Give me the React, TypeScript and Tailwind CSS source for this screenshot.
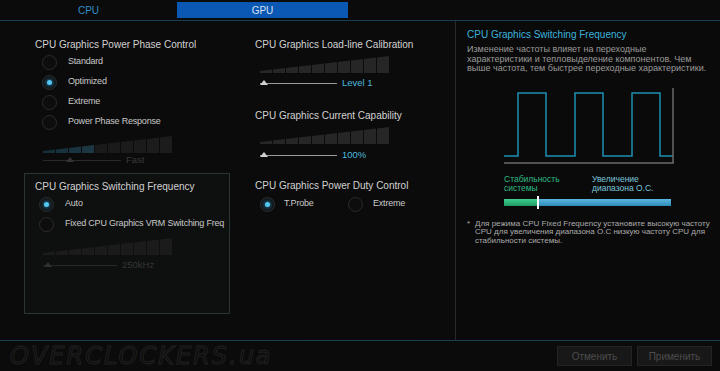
import type { ReactNode } from "react";

const font = { fontFamily: '"Liberation Sans", Arial, sans-serif' };

function Stairs({ colors }: { colors: string[] }) {
  const H = 17;
  const h = (x: number) => 2 + (15 * x) / 129;
  return (
    <svg width="130" height={H} className="block">
      {colors.map((c, i) => {
        const x0 = i * 13;
        const x1 = x0 + 12;
        return (
          <polygon
            key={i}
            points={`${x0},${H} ${x0},${H - h(x0)} ${x1},${H - h(x1)} ${x1},${H}`}
            fill={c}
          />
        );
      })}
    </svg>
  );
}

function Slider({
  knob,
  line,
  label,
  labelClass,
  knobClass,
  lineW,
}: {
  knob: number;
  line: string;
  label: string;
  labelClass: string;
  knobClass: string;
  lineW: number;
}) {
  return (
    <div className="flex h-[12px] items-center">
      <div className="relative h-[12px]" style={{ width: lineW }}>
        <div className={`absolute left-0 right-0 top-[6px] h-px ${line}`} />
        <div
          className={`absolute top-[3px] h-0 w-0 border-x-[4px] border-b-[5px] border-x-transparent ${knobClass}`}
          style={{ left: knob }}
        />
      </div>
      <span className={`ml-[5px] text-[9.5px] leading-none ${labelClass}`}>{label}</span>
    </div>
  );
}

function Radio({ on }: { on?: boolean }) {
  return (
    <span className="flex h-[15px] w-[15px] shrink-0 items-center justify-center rounded-full border border-[#2c2c2c] bg-[#0d0d0d]">
      {on && (
        <span className="h-[5px] w-[5px] rounded-full bg-[#53c8f5] shadow-[0_0_4px_1px_rgba(60,180,240,0.6)]" />
      )}
    </span>
  );
}

function RadioRow({ on, children, ml, gap }: { on?: boolean; children: ReactNode; ml: string; gap: string }) {
  return (
    <div className={`flex h-[20px] items-center ${ml}`}>
      <Radio on={on} />
      <span className={`${gap} whitespace-nowrap text-[9px] tracking-[-0.2px] text-[#c9c9c9]`}>{children}</span>
    </div>
  );
}

const title = "text-[10px] leading-[14px] text-[#d2d2d2]";

export default function App() {
  const grey = Array(10).fill("#262626");
  const dimPhase = ["#15303a", "#17323d", "#193440", "#1c3743", "#1a1a1a", "#1a1a1a", "#1b1b1b", "#1b1b1b", "#1c1c1c", "#1c1c1c"];
  const dimBox = Array(10).fill("#1b1b1b");

  return (
    <div className="flex h-[371px] w-[720px] flex-col overflow-hidden bg-[#0b0b0b]" style={font}>
      {/* tabs */}
      <div className="flex h-[20px] items-start pt-[2px]">
        <div className="flex h-[16px] w-[177px] items-center justify-center text-[10px] text-[#2e8fc9]">CPU</div>
        <div className="flex h-[16px] w-[171px] items-center justify-center bg-[#0a58b3] text-[10px] text-[#d6e0ee]">GPU</div>
      </div>
      <div className="h-px bg-[#173d50]" />

      <div className="flex h-[319px]">
        {/* left area */}
        <div className="flex w-[455px]">
          <div className="ml-[24px] flex w-[206px] flex-col pt-[17px]">
            <div className={`pl-[11px] ${title}`}>CPU Graphics Power Phase Control</div>
            <div className="pl-[11px]">
              <RadioRow ml="ml-[7px]" gap="ml-[11px]">Standard</RadioRow>
              <RadioRow ml="ml-[7px]" gap="ml-[11px]" on>Optimized</RadioRow>
              <RadioRow ml="ml-[7px]" gap="ml-[11px]">Extreme</RadioRow>
              <RadioRow ml="ml-[7px]" gap="ml-[11px]">Power Phase Response</RadioRow>
            </div>
            <div className="ml-[19px] mt-[4px]">
              <Stairs colors={dimPhase} />
            </div>
            <div className="ml-[19px] mt-[1px]">
              <Slider knob={23} lineW={78} line="bg-[#2a2a2a]" label="Fast" labelClass="text-[#3a3a3a]" knobClass="border-b-[#333333]" />
            </div>

            <div className="mt-[7px] flex h-[141px] flex-col border border-[#2b3536] bg-[#0e0f0f] pt-[6px]">
              <div className={`pl-[10px] ${title}`}>CPU Graphics Switching Frequency</div>
              <div className="pl-[10px]">
                <RadioRow ml="ml-[4px]" gap="ml-[11px]" on>Auto</RadioRow>
                <RadioRow ml="ml-[4px]" gap="ml-[11px]">Fixed CPU Graphics VRM Switching Freq</RadioRow>
              </div>
              <div className="ml-[18px] mt-[4px]">
                <Stairs colors={dimBox} />
              </div>
              <div className="ml-[18px] mt-[4px]">
                <Slider knob={1} lineW={74} line="bg-[#262626]" label="250kHz" labelClass="text-[#363636]" knobClass="border-b-[#303030]" />
              </div>
            </div>
          </div>

          <div className="ml-[25px] flex flex-col pt-[17px]">
            <div className={title}>CPU Graphics Load-line Calibration</div>
            <div className="ml-[5px] mt-[4px]">
              <Stairs colors={grey} />
            </div>
            <div className="ml-[5px] mt-[4px]">
              <Slider knob={0} lineW={77} line="bg-[#9a9a9a]" label="Level 1" labelClass="text-[#4bb8dc]" knobClass="border-b-[#d0d0d0]" />
            </div>
            <div className={`mt-[20px] ${title}`}>CPU Graphics Current Capability</div>
            <div className="ml-[5px] mt-[4px]">
              <Stairs colors={grey} />
            </div>
            <div className="ml-[5px] mt-[5px]">
              <Slider knob={0} lineW={77} line="bg-[#9a9a9a]" label="100%" labelClass="text-[#4bb8dc]" knobClass="border-b-[#d0d0d0]" />
            </div>
            <div className={`mt-[18px] ${title}`}>CPU Graphics Power Duty Control</div>
            <div className="mt-[1px] flex">
              <div className="w-[93px]">
                <RadioRow ml="ml-[5px]" gap="ml-[9px]" on>T.Probe</RadioRow>
              </div>
              <RadioRow ml="ml-0" gap="ml-[10px]">Extreme</RadioRow>
            </div>
          </div>
        </div>

        {/* right info panel */}
        <div className="flex w-[265px] flex-col border-l border-[#262a2b] bg-[#0a0a0a] pl-[11px] pt-[7px]">
          <div className="text-[10px] leading-[14px] text-[#3cb2dc]">CPU Graphics Switching Frequency</div>
          <div className="mt-[3px] whitespace-nowrap text-[9px] leading-[9.5px] text-[#9a9a9a]">
            Изменение частоты влияет на переходные
            <br />
            характеристики и тепловыделение компонентов. Чем
            <br />
            выше частота, тем быстрее переходные характеристики.
          </div>
          <svg width="178" height="80" className="ml-[34px] mt-[12px] block">
            <path
              d="M3 70 H17 V7 H45 V70 H74 V7 H102 V70 H131 V7 H159 V70 H172"
              fill="none"
              stroke="#1e8fb2"
              strokeWidth="1.5"
            />
            <path d="M3 77 H173 M172 2 V77" fill="none" stroke="#6a6a6a" strokeWidth="1.5" />
          </svg>
          <div className="ml-[37px] mt-[9px] flex text-[8.5px] leading-[9.5px]">
            <div className="w-[88px] text-[#2dbb84]">
              Стабильность
              <br />
              системы
            </div>
            <div className="text-[#7cc6de]">
              Увеличение
              <br />
              диапазона О.С.
            </div>
          </div>
          <div className="relative ml-[37px] mt-[5px] flex h-[7px] w-[167px]">
            <div className="w-[34px] bg-gradient-to-b from-[#3dd08e] to-[#1f9a62]" />
            <div className="flex-1 bg-gradient-to-b from-[#5ab8e0] to-[#2e8ab8]" />
            <div className="absolute left-[33px] top-[-3px] h-[13px] w-[2px] bg-white" />
          </div>
          <div className="mt-[14px] flex text-[8px] leading-[8.5px] text-[#aaaaaa]">
            <span className="w-[8px]">*</span>
            <span className="whitespace-nowrap">
              Для режима CPU Fixed Frequency установите высокую частоту
              <br />
              CPU для увеличения диапазона О.С низкую частоту CPU для
              <br />
              стабильности системы.
            </span>
          </div>
        </div>
      </div>

      <div className="h-px bg-gradient-to-r from-[#1a3f50] via-[#174050] to-[#1a3f50]" />

      {/* footer */}
      <div className="flex flex-1 items-center">
        <div
          className="ml-[10px] whitespace-nowrap text-[24px] italic leading-none tracking-[2px] text-transparent [-webkit-text-stroke:1px_#202020]"
          style={{ fontFamily: '"DejaVu Sans", sans-serif' }}
        >
          OVERCLOCKERS.ua
        </div>
        <div className="ml-auto mr-[8px] flex gap-[5px]">
          <button className="flex h-[20px] w-[75px] items-center justify-center border border-[#232323] bg-[#181818] text-[10px] text-[#4c4c4c]">
            Отменить
          </button>
          <button className="flex h-[20px] w-[75px] items-center justify-center border border-[#232323] bg-[#181818] text-[10px] text-[#4c4c4c]">
            Применить
          </button>
        </div>
      </div>
    </div>
  );
}
